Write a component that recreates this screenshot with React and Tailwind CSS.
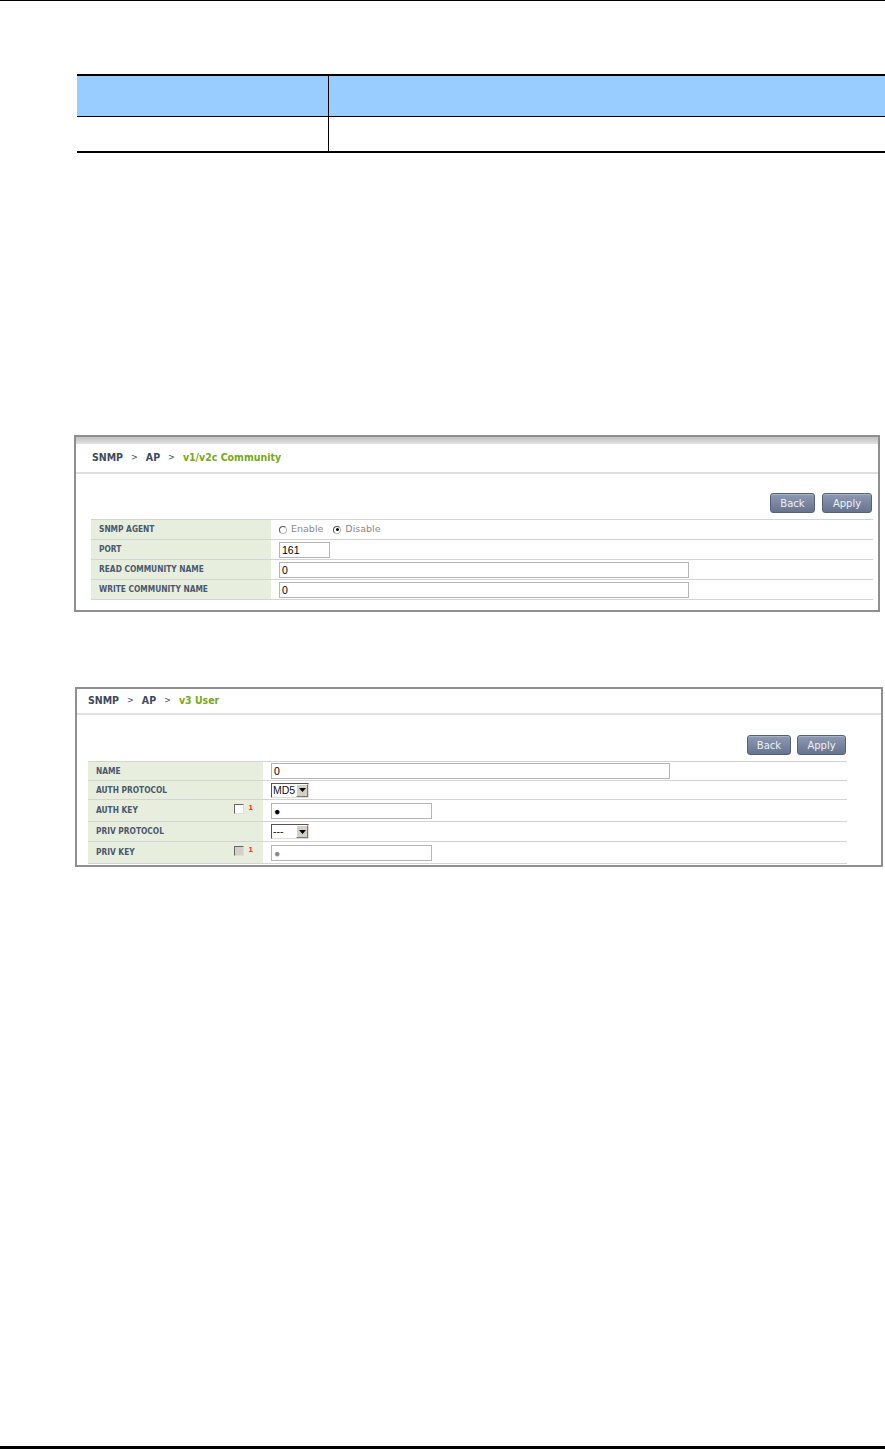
import React from "react";

const ui = "font-['DejaVu_Sans_Condensed','DejaVu_Sans',sans-serif]";
const plain = "font-['DejaVu_Sans',sans-serif]";
const field = "font-['Liberation_Sans',Arial,sans-serif]";

const Crumb = ({ page }) => (
  <div className={`${ui} flex items-center text-[10.5px] font-bold text-[#3d4a5c]`}>
    <span>SNMP</span>
    <span className="mx-[8px] text-[9px] font-normal">&gt;</span>
    <span>AP</span>
    <span className="mx-[8px] text-[9px] font-normal">&gt;</span>
    <span className="text-[#76a820]">{page}</span>
  </div>
);

const Btn = ({ children, w }) => (
  <div
    className={`${plain} ${w} h-[20px] flex items-center justify-center rounded-[3px] border border-[#56627c] bg-gradient-to-b from-[#8e9ab4] to-[#68748f] text-[10px] text-[#eef1f7] shadow-[inset_0_1px_0_#a9b3c8]`}
  >
    {children}
  </div>
);

const Row = ({ label, h, lw, extra, children }) => (
  <div className={`flex ${h} border-t border-[#d3d3d3]`}>
    <div className={`${lw} shrink-0 bg-[#e8eedd] flex items-center pl-[8px] pr-[10px]`}>
      <span className={`${ui} text-[8.3px] font-bold text-[#4a586e] flex-1`}>{label}</span>
      {extra}
    </div>
    <div className="flex-1 flex items-center pl-[8px]">{children}</div>
  </div>
);

const TextBox = ({ w, value, dim }) => (
  <input
    readOnly
    value={value}
    className={`${field} ${w} h-[16px] border border-[#b5b5b5] bg-white px-[2px] text-[10.5px] outline-none ${dim ? "text-[#8a8a8a]" : "text-black"}`}
  />
);

const Radio = ({ on, label }) => (
  <span className="flex items-center mr-[10px]">
    <span className="w-[8px] h-[8px] rounded-full border border-[#555] border-b-[#bbb] border-r-[#bbb] bg-white flex items-center justify-center">
      {on && <span className="w-[3px] h-[3px] rounded-full bg-black" />}
    </span>
    <span className={`${plain} ml-[4px] text-[9.5px] text-[#888]`}>{label}</span>
  </span>
);

const Check = ({ disabled }) => (
  <span
    className={`w-[10px] h-[10px] border border-t-[#666] border-l-[#666] border-b-[#ddd] border-r-[#ddd] ${disabled ? "bg-[#d4d0c8]" : "bg-white"}`}
  />
);

const Select = ({ value, w }) => (
  <div className={`flex h-[15px] ${w} border border-t-[#555] border-l-[#555] border-b-[#ddd] border-r-[#ddd] bg-white`}>
    <span className={`${field} flex-1 pl-[1px] text-[10.5px] leading-[13px] text-[#111]`}>{value}</span>
    <span className="w-[12px] bg-[#d4d0c8] border border-t-white border-l-white border-b-[#777] border-r-[#777] flex items-center justify-center">
      <svg width="7" height="4" viewBox="0 0 7 4"><path d="M0 0h7L3.5 4z" fill="#000" /></svg>
    </span>
  </div>
);

const Mark = ({ disabled }) => (
  <span className="flex items-start gap-[5px] mb-[3px]">
    <Check disabled={disabled} />
    <span className="text-[8px] leading-[8px] font-bold text-[#ff1a1a] font-['Liberation_Sans']">1</span>
  </span>
);

export default function App() {
  return (
    <div className="w-[885px] h-[1449px] bg-white flex flex-col">
      <div className="h-px bg-black" />

      {/* parameter table */}
      <div className="mt-[73px] ml-[77px] w-[808px] border-t-2 border-b-2 border-black">
        <div className="flex h-[41px] bg-[#99ccff] border-b border-black">
          <div className="w-[252px] border-r border-black" />
          <div className="flex-1" />
        </div>
        <div className="flex h-[34px]">
          <div className="w-[252px] border-r border-black" />
          <div className="flex-1" />
        </div>
      </div>

      {/* v1/v2c community */}
      <div className="mt-[282px] ml-[74px] w-[806px] border-2 border-[#8f8f8f]">
        <div className="h-[7px] bg-gradient-to-b from-[#c2c2c2] to-[#e2e2e2]" />
        <div className="h-[30px] flex items-center pl-[16px] border-b-2 border-[#e0e0e0]">
          <Crumb page="v1/v2c Community" />
        </div>
        <div className="flex justify-end gap-[7px] pt-[19px] pr-[6px]">
          <Btn w="w-[45px]">Back</Btn>
          <Btn w="w-[50px]">Apply</Btn>
        </div>
        <div className="mt-[6px] ml-[15px] mr-[5px] mb-[10px] border-b border-[#d3d3d3]">
          <Row label="SNMP AGENT" h="h-[20px]" lw="w-[180px]">
            <Radio label="Enable" />
            <Radio on label="Disable" />
          </Row>
          <Row label="PORT" h="h-[20px]" lw="w-[180px]">
            <TextBox w="w-[51px]" value="161" />
          </Row>
          <Row label="READ COMMUNITY NAME" h="h-[20px]" lw="w-[180px]">
            <TextBox w="w-[410px]" value="0" />
          </Row>
          <Row label="WRITE COMMUNITY NAME" h="h-[20px]" lw="w-[180px]">
            <TextBox w="w-[410px]" value="0" />
          </Row>
        </div>
      </div>

      {/* v3 user */}
      <div className="mt-[75px] ml-[75px] w-[808px] border-2 border-[#8f8f8f]">
        <div className="h-[26px] flex items-center pl-[11px] border-b-2 border-[#e0e0e0]">
          <Crumb page="v3 User" />
        </div>
        <div className="flex justify-end gap-[6px] pt-[20px] pr-[35px]">
          <Btn w="w-[44px]">Back</Btn>
          <Btn w="w-[49px]">Apply</Btn>
        </div>
        <div className="mt-[6px] ml-[11px] mr-[34px] mb-px border-b border-[#d3d3d3]">
          <Row label="NAME" h="h-[19px]" lw="w-[175px]">
            <TextBox w="w-[399px]" value="0" />
          </Row>
          <Row label="AUTH PROTOCOL" h="h-[19px]" lw="w-[175px]">
            <Select w="w-[38px]" value="MD5" />
          </Row>
          <Row label="AUTH KEY" h="h-[22px]" lw="w-[175px]" extra={<Mark />}>
            <TextBox w="w-[161px]" value="●" />
          </Row>
          <Row label="PRIV PROTOCOL" h="h-[20px]" lw="w-[175px]">
            <Select w="w-[38px]" value="---" />
          </Row>
          <Row label="PRIV KEY" h="h-[22px]" lw="w-[175px]" extra={<Mark disabled />}>
            <TextBox w="w-[161px]" value="●" dim />
          </Row>
        </div>
      </div>

      <div className="mt-auto h-[3px] bg-black" />
    </div>
  );
}
